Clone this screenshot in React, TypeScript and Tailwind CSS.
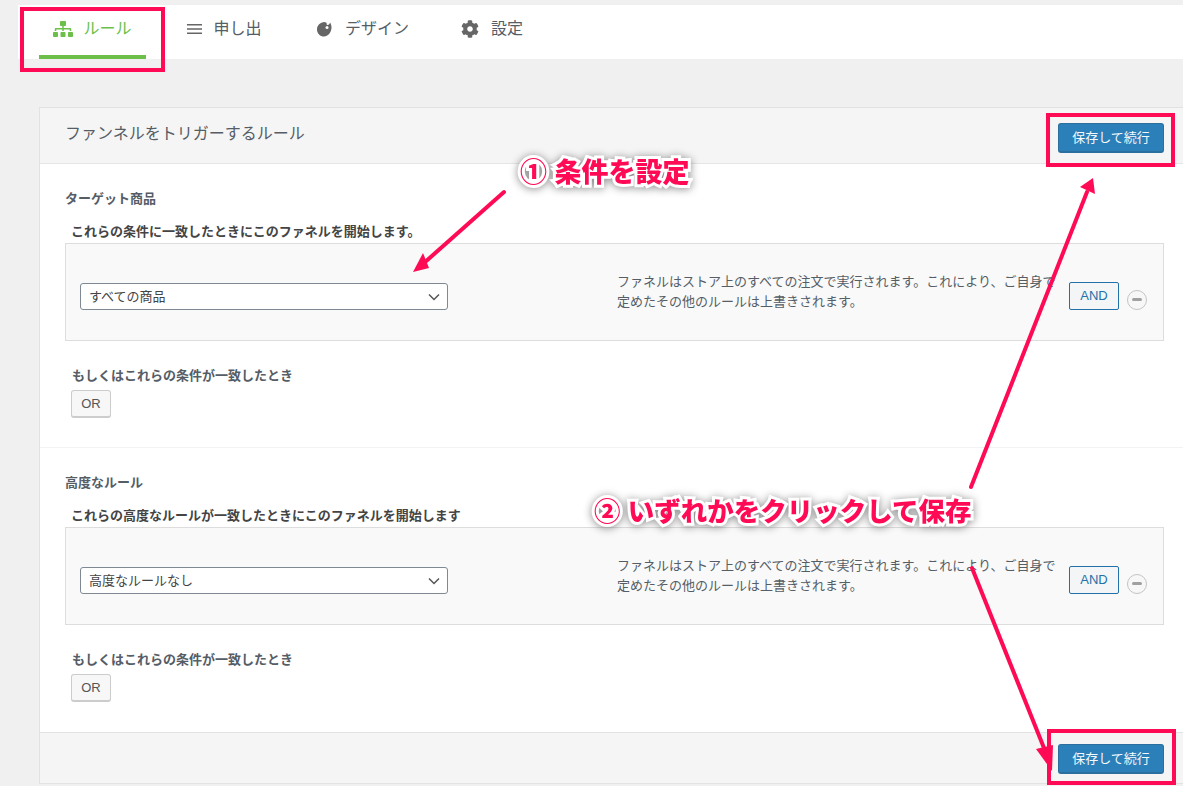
import { FaCog, FaSitemap } from "react-icons/fa";

const FONT = "[font-family:'Liberation_Sans','Noto_Sans_CJK_JP',sans-serif]";

function SaveButton({ className }: { className: string }) {
  return (
    <button className={`h-[30px] w-[106px] rounded-[3px] border border-[#2a6f9e] border-b-2 bg-[#2b80b9] text-[13px] text-[#f4f9fc] ${className}`}>
      保存して続行
    </button>
  );
}

function Tab({ icon, label, active, className }: { icon: React.ReactNode; label: string; active?: boolean; className: string }) {
  return (
    <div
      className={`flex h-[54px] items-center justify-center text-[16px] ${className} ${
        active ? "border-b-[4px] border-[#6cc04a] pb-[2px] text-[#6cc04a]" : "pb-[6px] text-[#555d66]"
      }`}
    >
      {icon}
      <span>{label}</span>
    </div>
  );
}

function RuleBlock({ title, label, value }: { title: string; label: string; value: string }) {
  return (
    <div className="px-[25px]">
      <h3 className="text-[13px] leading-[18px] font-bold text-[#555d66]">{title}</h3>
      <p className="mt-[15px] pl-[6px] text-[13px] leading-[18px] font-bold text-[#444]">{label}</p>
      <div className="mt-[2px] flex h-[98px] w-[1099px] items-center border border-[#dddddd] bg-[#f9f9f9] pl-[14px]">
        <div className="mt-[9px] flex h-[27px] w-[368px] items-center justify-between rounded-[3px] border border-[#7e8993] bg-white pr-[5px] pl-[8px] text-[13px] text-[#444]">
          <span>{value}</span>
          <svg width="16" height="16" viewBox="0 0 16 16" fill="none" stroke="#555" strokeWidth="1.5">
            <path d="M3 5.5l5 5 5-5" />
          </svg>
        </div>
        <p className="ml-[169px] w-[442px] text-[13px] leading-[20px] text-[#555d66]">
          ファネルはストア上のすべての注文で実行されます。これにより、ご自身で定めたその他のルールは上書きされます。
        </p>
        <button className="mt-[8px] ml-[10px] h-[28px] w-[50px] rounded-[2px] border border-[#2271a8] bg-[#f3f5f6] text-[13px] text-[#2271a8]">
          AND
        </button>
        <span className="mt-[15px] ml-[8px] flex h-[20px] w-[20px] items-center justify-center rounded-full border border-[#c4c4c4] bg-[#f7f7f7]">
          <span className="h-[3px] w-[10px] rounded-sm bg-[#a0a0a0]" />
        </span>
      </div>
      <p className="mt-[26px] pl-[7px] text-[13px] leading-[18px] font-bold text-[#555d66]">もしくはこれらの条件が一致したとき</p>
      <button className="mt-[5px] ml-[6px] h-[28px] w-[40px] rounded-[3px] border border-[#cccccc] border-b-2 bg-[#f7f7f7] text-[13px] text-[#555]">
        OR
      </button>
    </div>
  );
}

export default function App() {
  return (
    <div className={`relative h-[786px] w-[1183px] overflow-hidden bg-[#f0f0f1] ${FONT}`}>
      <nav className="mt-[5px] ml-[18px] flex h-[54px] items-start bg-white">
        <Tab
          active
          className="ml-[21px] w-[107px] gap-[10px]"
          label="ルール"
          icon={<FaSitemap className="text-[20px]" />}
        />
        <Tab
          className="ml-[41px] w-[75px] gap-[10px]"
          label="申し出"
          icon={
            <svg width="16" height="12" viewBox="0 0 16 12" fill="#666">
              <path d="M0 1h15v1.6H0zM0 5.2h15v1.6H0zM0 9.4h15v1.6H0z" />
            </svg>
          }
        />
        <Tab
          className="ml-[54px] w-[93px] gap-[12px]"
          label="デザイン"
          icon={
            <svg width="17" height="16" viewBox="0 0 17 16" fill="#666">
              <path d="M8 1a7.5 7.5 0 0 0-7 7.4C1 12.5 4.2 15.5 8 15.5c3.7 0 7.5-4 7.5-9 0-2-.6-3.7-1.5-5-.3 1.500-1.200 2.500-2.600 2.400-.6 0-.8-.7-.7-1.300.1-.7-.9-1.600-2.700-1.600z" />
              <circle cx="11" cy="6.500" r="1.500" fill="#fff" />
            </svg>
          }
        />
        <Tab
          className="ml-[52px] w-[62px] gap-[12px]"
          label="設定"
          icon={<FaCog className="text-[18px] text-[#666]" />}
        />
      </nav>

      <main className="mt-[48px] ml-[39px] w-[1144px] border-t border-l border-[#e2e2e2] bg-white">
        <header className="flex h-[56px] items-center justify-between border-b border-[#e5e5e5] bg-[#f5f5f5] pr-[19px] pl-[25px]">
          <h2 className="mb-[4px] text-[16px] text-[#555d66]">ファンネルをトリガーするルール</h2>
          <SaveButton className="mt-[5px]" />
        </header>
        <section className="h-[284px] border-b border-[#f3f3f3] pt-[26px]">
          <RuleBlock
            title="ターゲット商品"
            label="これらの条件に一致したときにこのファネルを開始します。"
            value="すべての商品"
          />
        </section>
        <section className="h-[284px] pt-[26px]">
          <RuleBlock
            title="高度なルール"
            label="これらの高度なルールが一致したときにこのファネルを開始します"
            value="高度なルールなし"
          />
        </section>
        <footer className="flex h-[52px] items-center justify-end border-t border-b border-[#e2e2e2] bg-[#f5f5f5] pr-[19px]">
          <SaveButton className="mt-[2px]" />
        </footer>
      </main>

      {/* annotations on top of the screenshot */}
      <svg className="absolute inset-0" width="1183" height="786" viewBox="0 0 1183 786" fill="none">
        <path d="M504 192L424 263" stroke="#ff0a54" strokeWidth="4" strokeLinecap="round" />
        <path d="M413 272l10-19 6 15z" fill="#ff0a54" />
        <path d="M971 487L1087 192" stroke="#ff0a54" strokeWidth="4" strokeLinecap="round" />
        <path d="M1093 178l2 16-15-7z" fill="#ff0a54" />
        <path d="M972 568L1046 753" stroke="#ff0a54" strokeWidth="4" strokeLinecap="round" />
        <path d="M1052 771l-16-22 17-4z" fill="#ff0a54" />
      </svg>

      <div className="absolute top-[7px] left-[20px] h-[65px] w-[145px] border-[4px] border-[#ff0a54]" />
      <div className="absolute top-[113px] left-[1046px] h-[54px] w-[129px] border-[4px] border-[#ff0a54]" />
      <div className="absolute top-[729px] left-[1047px] h-[56px] w-[129px] border-[4px] border-[#ff0a54]" />

      <div className="absolute top-[155px] left-[520px] text-[27px] leading-[36px] font-black whitespace-nowrap text-[#ff0a54] [paint-order:stroke_fill] [-webkit-text-stroke:6px_white] [filter:drop-shadow(0_1px_4px_rgba(0,0,0,0.45))]">
        ① 条件を設定
      </div>
      <div className="absolute top-[494px] left-[594px] text-[26.5px] leading-[36px] font-black whitespace-nowrap text-[#ff0a54] [paint-order:stroke_fill] [-webkit-text-stroke:6px_white] [filter:drop-shadow(0_1px_4px_rgba(0,0,0,0.45))]">
        ② いずれかをクリックして保存
      </div>
    </div>
  );
}
